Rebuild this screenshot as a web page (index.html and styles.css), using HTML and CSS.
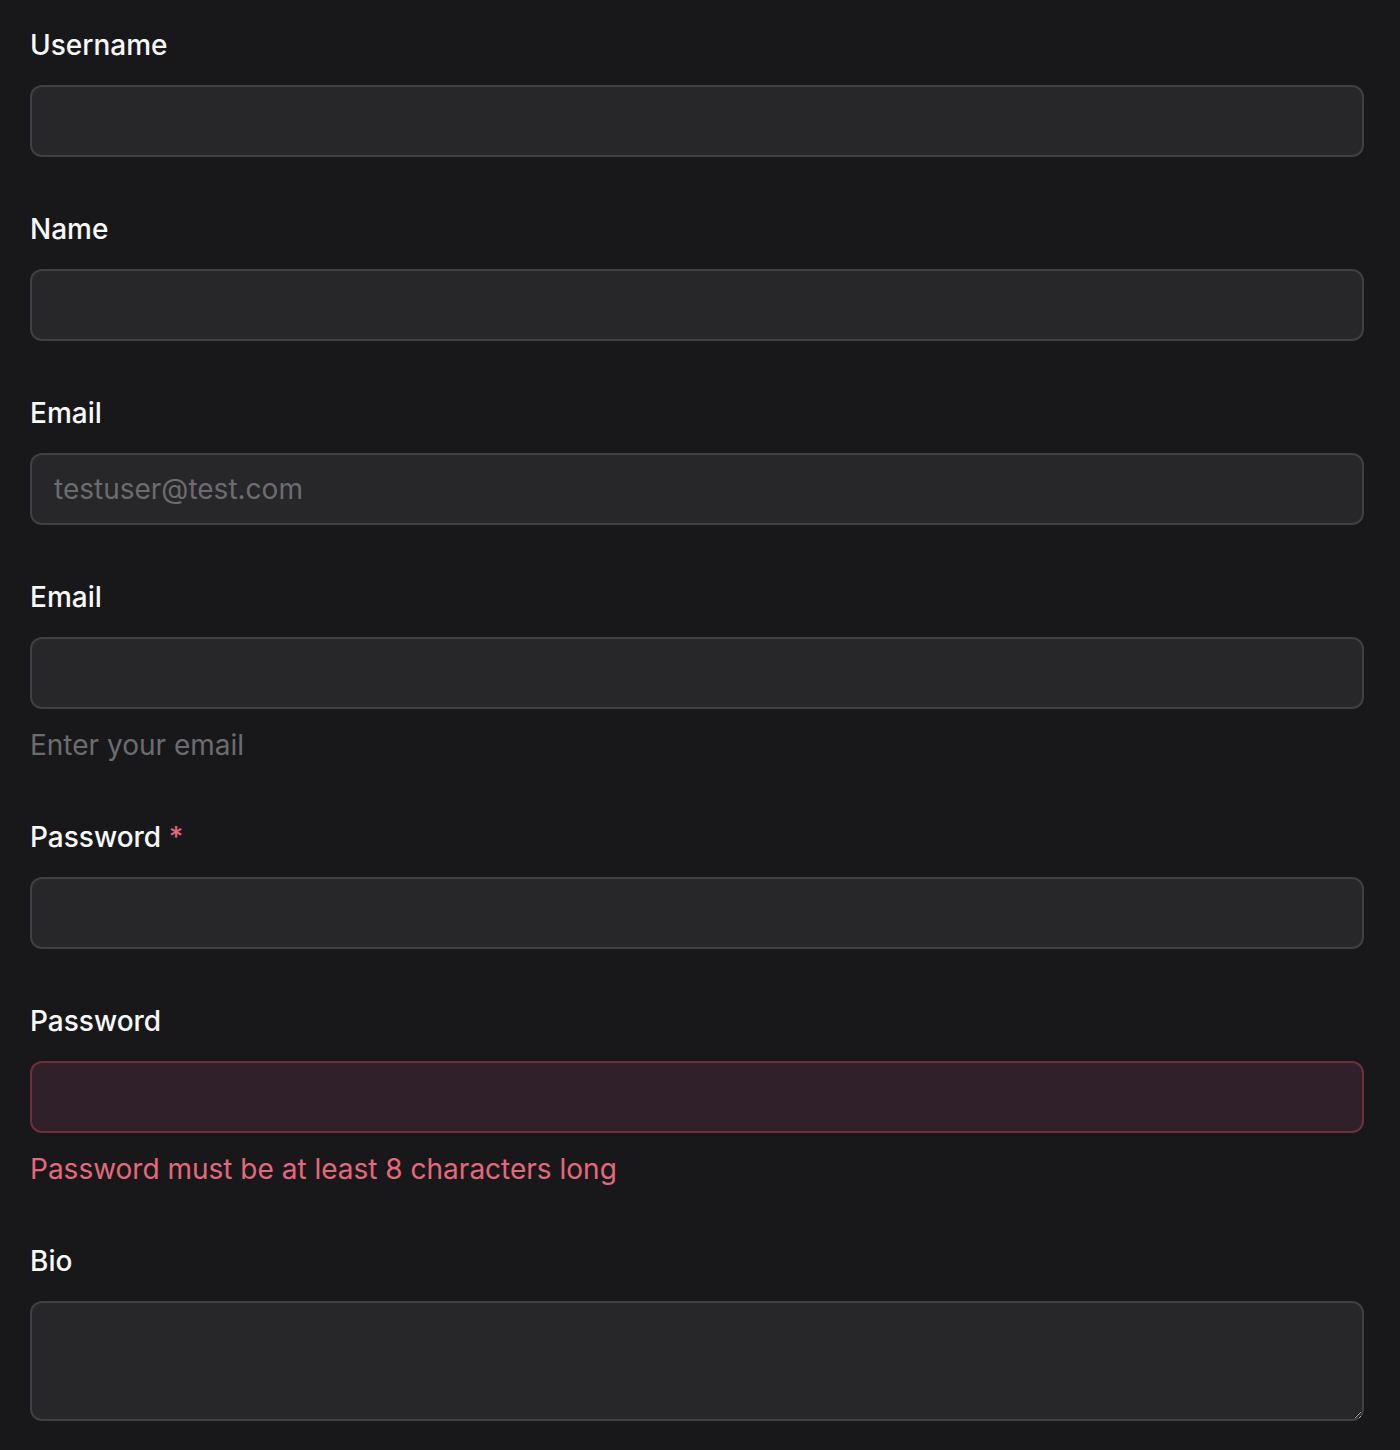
FILE: index.html
```html
<!DOCTYPE html>
<html lang="en">
<head>
<meta charset="utf-8">
<title>Form</title>
<link rel="stylesheet" href="styles.css">
</head>
<body>
<form class="form">
  <div class="field">
    <label class="label" for="username">Username</label>
    <input class="input" id="username" type="text">
  </div>
  <div class="field">
    <label class="label" for="name">Name</label>
    <input class="input" id="name" type="text">
  </div>
  <div class="field">
    <label class="label" for="email1">Email</label>
    <input class="input" id="email1" type="email" placeholder="testuser@test.com">
  </div>
  <div class="field">
    <label class="label" for="email2">Email</label>
    <input class="input" id="email2" type="email">
    <p class="help">Enter your email</p>
  </div>
  <div class="field">
    <label class="label" for="pw1">Password <span class="req">*</span></label>
    <input class="input" id="pw1" type="password">
  </div>
  <div class="field">
    <label class="label" for="pw2">Password</label>
    <input class="input input-error" id="pw2" type="password">
    <p class="error">Password must be at least 8 characters long</p>
  </div>
  <div class="field">
    <label class="label" for="bio">Bio</label>
    <textarea class="input textarea" id="bio"></textarea>
  </div>
</form>
</body>
</html>
```

FILE: styles.css
```css
html, body {
  margin: 0;
  background: #18181b;
}
body {
  font-family: Inter, "Noto Sans", sans-serif;
  color: #fafafa;
}
.form {
  display: flex;
  flex-direction: column;
  gap: 52px;
  padding: 25px 36px 0 30px;
}
.field {
  display: flex;
  flex-direction: column;
}
.label {
  font-size: 28px;
  line-height: 40px;
  font-weight: 500;
  margin-bottom: 20px;
  color: #fafafa;
}
.req {
  color: #e5697c;
}
.input {
  box-sizing: border-box;
  width: 100%;
  height: 72px;
  margin: 0;
  padding: 0 22px;
  background: #27272a;
  border: 2px solid #3f3f46;
  border-radius: 12px;
  font-family: Inter, "Noto Sans", sans-serif;
  font-size: 28px;
  color: #fafafa;
  outline: none;
}
.input::placeholder {
  color: #6c6c70;
}
.input-error {
  background: #2f2029;
  border-color: #6e2f3a;
}
.textarea {
  height: 120px;
  resize: vertical;
  display: block;
}
.help, .error {
  margin: 16px 0 0;
  font-size: 28px;
  line-height: 40px;
}
.help {
  color: #6c6c70;
}
.error {
  color: #e5697c;
}
```
